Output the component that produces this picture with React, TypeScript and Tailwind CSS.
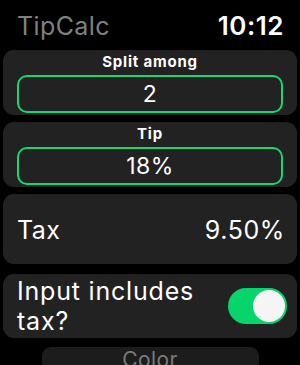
import React from "react";

export default function App() {
  return (
    <div
      className="w-[300px] h-[365px] bg-black overflow-hidden text-white"
      style={{ fontFamily: "Inter, 'Noto Sans', sans-serif" }}
    >
      <div className="h-[50px] flex items-center justify-between pl-[17px] pr-[16px] pt-[2px]">
        <span className="text-[25px] leading-none text-[#808080] tracking-[0.4px]">TipCalc</span>
        <span className="text-[26px] leading-none font-semibold tracking-[0.5px]">10:12</span>
      </div>
      <div className="px-[3px] flex flex-col">
        <div className="bg-[#222222] rounded-[11px] flex flex-col items-center pt-[3px] pb-[2px] px-[14px]">
          <span className="text-[15px] leading-[17px] font-bold tracking-[0.8px]">Split among</span>
          <div className="mt-[5px] w-full h-[38px] border-2 border-[#16d871] rounded-[10px] flex items-center justify-center text-[23px] tracking-[0.5px]">
            2
          </div>
        </div>
        <div className="mt-[7px] bg-[#222222] rounded-[11px] flex flex-col items-center pt-[3px] pb-[2px] px-[14px]">
          <span className="text-[15px] leading-[17px] font-bold tracking-[0.8px]">Tip</span>
          <div className="mt-[5px] w-full h-[38px] border-2 border-[#16d871] rounded-[10px] flex items-center justify-center text-[23px] tracking-[0.5px]">
            18%
          </div>
        </div>
        <div className="mt-[7px] h-[70px] bg-[#222222] rounded-[11px] flex items-center justify-between pl-[14px] pr-[12px] pt-[3px]">
          <span className="text-[25px] tracking-[0.5px]">Tax</span>
          <span className="text-[25px] tracking-[0.6px]">9.50%</span>
        </div>
        <div className="mt-[10px] h-[64px] bg-[#222222] rounded-[11px] flex items-center justify-between pl-[14px] pr-[10px]">
          <span className="text-[25px] leading-[30px] tracking-[0.8px]">
            Input includes
            <br />
            tax?
          </span>
          <div className="w-[59px] h-[36px] rounded-full bg-[#08d46c] flex items-center justify-end pr-[2px]">
            <div className="w-[32px] h-[32px] rounded-full bg-[#f5f5f5]" />
          </div>
        </div>
        <div className="mt-[9px] mx-auto w-[217px] h-[40px] bg-[#1c1c1c] rounded-[9px] flex justify-center">
          <span className="text-[21px] leading-[26px] text-[#7a7a7a] tracking-[0.4px]">Color</span>
        </div>
      </div>
    </div>
  );
}
